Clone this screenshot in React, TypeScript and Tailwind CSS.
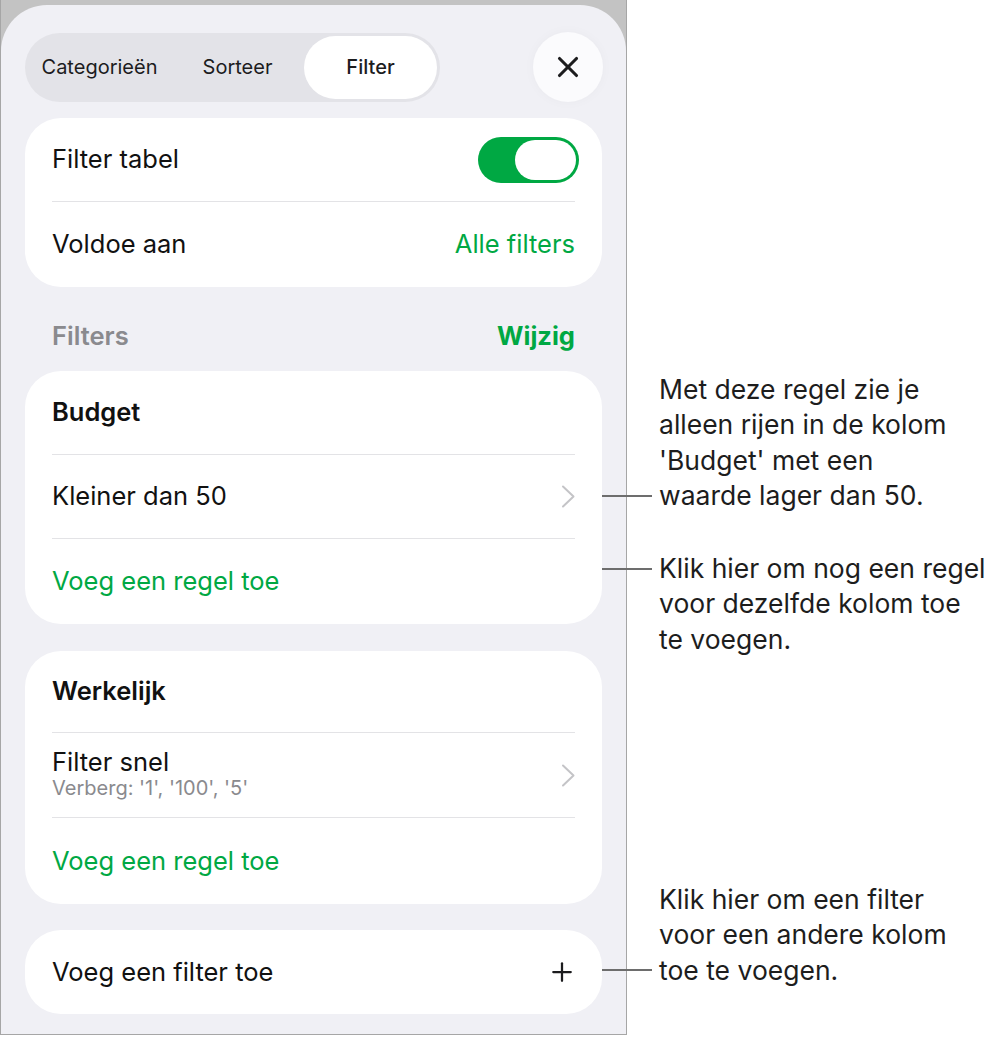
import { Plus, X } from 'lucide-react';

const ui = { fontFamily: 'Inter, "Noto Sans", sans-serif' };

function Separator() {
  return <div className="mx-[27px] h-px bg-[#e3e3e6]" />;
}

function Row({ children, h = 'h-[84px]' }: { children: React.ReactNode; h?: string }) {
  return <div className={`${h} flex items-center justify-between px-[27px]`}>{children}</div>;
}

function Chevron() {
  return (
    <svg width="15" height="23" viewBox="0 0 15 23" className="mr-[-1px]" fill="none">
      <path d="M2 1.5 L12.5 11.5 L2 21.5" stroke="#c4c4c7" strokeWidth="2" strokeLinecap="round" strokeLinejoin="round" />
    </svg>
  );
}

function Toggle() {
  return (
    <div className="w-[101px] h-[46px] mr-[-4px] rounded-full bg-[#00a843] p-[3px] flex justify-end">
      <div className="w-[61px] h-full rounded-full bg-white" />
    </div>
  );
}

function Callout({ top, lineAt, lines }: { top: number; lineAt: number; lines: string[] }) {
  return (
    <div className="absolute left-[602px]" style={{ top }}>
      <div className="absolute left-0 w-[50px] h-[2px] bg-[#6d6d6d]" style={{ top: lineAt }} />
      <div className="ml-[57px] text-[26.5px] leading-[35.3px] text-[#1d1d1d]" style={ui}>
        {lines.map((l) => (
          <div key={l}>{l}</div>
        ))}
      </div>
    </div>
  );
}

export default function App() {
  return (
    <div className="relative w-[1000px] h-[1037px] bg-white">
      {/* device frame */}
      <div className="w-[627px] h-[1035px] bg-[#c3c3c3] border-x border-b border-[#a6a6a6] pt-[5px]">
        <div className="h-full rounded-t-[46px] bg-[#f0f0f5] px-[24px] pt-[27px] flex flex-col" style={ui}>
          {/* tabs + close */}
          <div className="flex items-center justify-between">
            <div className="w-[415px] h-[69px] rounded-full bg-[#e3e3e8] p-[3px] flex items-center text-[20px] text-[#1c1c1e]">
              <div className="w-[143px] text-center">Categorieën</div>
              <div className="w-[133px] text-center">Sorteer</div>
              <div className="flex-1 h-full rounded-full bg-white flex items-center justify-center font-medium">
                Filter
              </div>
            </div>
            <button className="w-[70px] h-[70px] mr-[-1px] rounded-full bg-[#fbfbfd] flex items-center justify-center shadow-[0_0_12px_rgba(0,0,0,0.03)]">
              <X className="w-[34px] h-[34px] text-[#1c1c1e]" strokeWidth={2.2} />
            </button>
          </div>

          {/* table filter toggle */}
          <div className="mt-[16px] rounded-[36px] bg-white text-[25.5px] text-[#111]">
            <Row h="h-[83px]">
              <span>Filter tabel</span>
              <Toggle />
            </Row>
            <Separator />
            <Row h="h-[85px]">
              <span>Voldoe aan</span>
              <span className="text-[#00a843]">Alle filters</span>
            </Row>
          </div>

          {/* section header */}
          <div className="h-[84px] flex items-end justify-between px-[27px] pb-[21px] text-[25.5px] leading-[28px] font-semibold">
            <span className="text-[#8a8a8e]">Filters</span>
            <span className="text-[#00a843] font-bold">Wijzig</span>
          </div>

          {/* Budget */}
          <div className="rounded-[36px] bg-white text-[25.5px] text-[#111]">
            <Row h="h-[83px]">
              <span className="font-semibold">Budget</span>
            </Row>
            <Separator />
            <Row h="h-[83px]">
              <span>Kleiner dan 50</span>
              <Chevron />
            </Row>
            <Separator />
            <Row h="h-[85px]">
              <span className="text-[#00a843]">Voeg een regel toe</span>
            </Row>
          </div>

          {/* Werkelijk */}
          <div className="mt-[27px] rounded-[36px] bg-white text-[25.5px] text-[#111]">
            <Row h="h-[81px]">
              <span className="font-semibold">Werkelijk</span>
            </Row>
            <Separator />
            <Row h="h-[84px]">
              <div className="flex flex-col pb-[2px]">
                <span className="leading-[28px]">Filter snel</span>
                <span className="text-[20px] leading-[24px] text-[#8a8a8e]">Verberg: '1', '100', '5'</span>
              </div>
              <Chevron />
            </Row>
            <Separator />
            <Row h="h-[86px]">
              <span className="text-[#00a843]">Voeg een regel toe</span>
            </Row>
          </div>

          {/* add filter */}
          <div className="mt-[26px] rounded-[36px] bg-white text-[25.5px] text-[#111]">
            <Row h="h-[84px]">
              <span>Voeg een filter toe</span>
              <Plus className="w-[30px] h-[30px] text-[#1c1c1e] mr-[-2px]" strokeWidth={1.8} />
            </Row>
          </div>
        </div>
      </div>

      {/* annotations */}
      <Callout top={372} lineAt={123} lines={['Met deze regel zie je', 'alleen rijen in de kolom', "'Budget' met een", 'waarde lager dan 50.']} />
      <Callout top={551} lineAt={17} lines={['Klik hier om nog een regel', 'voor dezelfde kolom toe', 'te voegen.']} />
      <Callout top={882} lineAt={87} lines={['Klik hier om een filter', 'voor een andere kolom', 'toe te voegen.']} />
    </div>
  );
}
